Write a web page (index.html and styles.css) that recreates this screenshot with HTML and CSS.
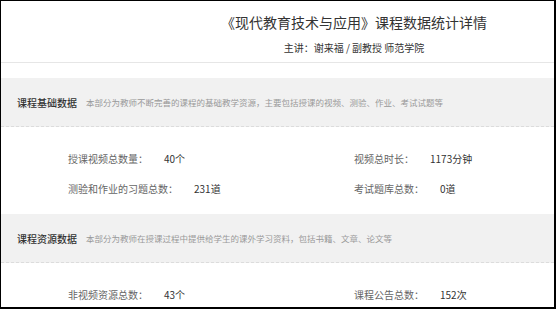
FILE: index.html
```html
<!DOCTYPE html>
<html lang="zh-CN">
<head>
  <meta charset="UTF-8">
  <title>课程数据统计详情</title>
  <meta name="viewport" content="width=device-width, initial-scale=1.0">
  <link rel="stylesheet" href="styles.css">
</head>
<body>
  <div class="frame">
    <div class="header">
      <div class="header-inner">
        <h1 class="title">《现代教育技术与应用》课程数据统计详情</h1>
        <div class="subtitle">主讲：谢来福 / 副教授 师范学院</div>
      </div>
    </div>

    <!-- 课程基础数据 -->
    <div class="section-head">
      <span class="section-name">课程基础数据</span>
      <span class="section-desc">本部分为教师不断完善的课程的基础教学资源，主要包括授课的视频、测验、作业、考试试题等</span>
    </div>
    <div class="stats">
      <div class="stat"><span class="label">授课视频总数量：</span><span class="value">40个</span></div>
      <div class="stat"><span class="label">视频总时长：</span><span class="value">1173分钟</span></div>
      <div class="stat"><span class="label">测验和作业的习题总数：</span><span class="value">231道</span></div>
      <div class="stat"><span class="label">考试题库总数：</span><span class="value">0道</span></div>
    </div>

    <!-- 课程资源数据 -->
    <div class="section-head">
      <span class="section-name">课程资源数据</span>
      <span class="section-desc">本部分为教师在授课过程中提供给学生的课外学习资料，包括书籍、文章、论文等</span>
    </div>
    <div class="stats">
      <div class="stat"><span class="label">非视频资源总数：</span><span class="value">43个</span></div>
      <div class="stat"><span class="label">课程公告总数：</span><span class="value">152次</span></div>
    </div>
  </div>
</body>
</html>
```

FILE: styles.css
```css
body {
  margin: 0;
  background: #fff;
  font-family: "Noto Sans CJK SC", "Noto Sans", "Liberation Sans", sans-serif;
  color: #333;
}
.frame {
  box-sizing: border-box;
  width: 556px;
  height: 309px;
  border-top: 1px solid #000;
  border-left: 1px solid #000;
  border-right: 2px solid #000;
  border-bottom: 2px solid #000;
  overflow: hidden;
  background: #fff;
}
.header {
  height: 61px;
  border-bottom: 1px solid #e6e6e6;
  display: flex;
  justify-content: flex-end;
  padding-right: 67px;
}
.header-inner {
  text-align: center;
  padding-top: 11px;
}
.title {
  margin: 0;
  font-size: 14px;
  line-height: 20px;
  font-weight: normal;
  color: #333;
}
.subtitle {
  margin-top: 9px;
  font-size: 10px;
  line-height: 14px;
  color: #333;
}
.section-head {
  margin-top: 15px;
  height: 48px;
  background: #f1f1f1;
  border-bottom: 1px dashed #dcdcdc;
  display: flex;
  align-items: center;
  padding-left: 16px;
}
.stats + .section-head {
  margin-top: 0;
}
.section-name {
  font-size: 10px;
  color: #333;
  font-weight: 500;
}
.section-desc {
  margin-left: 9px;
  font-size: 8.5px;
  color: #999;
}
.stats {
  display: grid;
  grid-template-columns: 286px 1fr;
  padding: 16px 0 11px 67px;
}
.stat {
  height: 30px;
  display: flex;
  align-items: center;
  font-size: 10px;
}
.label {
  color: #666;
}
.value {
  margin-left: 16px;
  color: #333;
}
```
